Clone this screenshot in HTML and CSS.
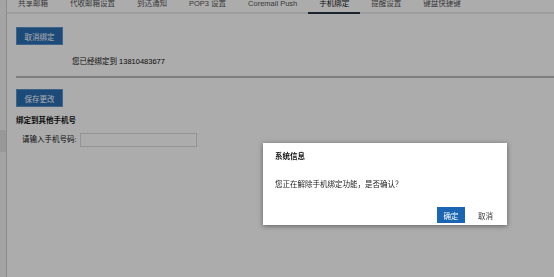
FILE: index.html
```html
<!DOCTYPE html>
<html lang="zh-CN">
<head>
<meta charset="utf-8">
<title>手机绑定</title>
<link rel="stylesheet" href="styles.css">
</head>
<body>
<div class="frame">
  <div class="leftbar"><div class="thumb"></div></div>
  <div class="main">
    <div class="tabs">
      <div class="tab">共享邮箱</div>
      <div class="tab">代收邮箱设置</div>
      <div class="tab">到达通知</div>
      <div class="tab">POP3 设置</div>
      <div class="tab">Coremail Push</div>
      <div class="tab active">手机绑定</div>
      <div class="tab">提醒设置</div>
      <div class="tab">键盘快捷键</div>
    </div>
    <div class="content">
      <div class="section first">
        <button class="btn">取消绑定</button>
        <div class="bound">您已经绑定到 13810483677</div>
      </div>
      <div class="section second">
        <button class="btn">保存更改</button>
        <div class="subtitle">绑定到其他手机号</div>
        <div class="field">
          <label class="label">请输入手机号码:</label>
          <input class="input" type="text">
        </div>
      </div>
    </div>
  </div>
</div>
<div class="overlay"></div>
<div class="dialog">
  <div class="dlg-title">系统信息</div>
  <div class="dlg-body">您正在解除手机绑定功能，是否确认？</div>
  <div class="dlg-actions">
    <button class="dlg-ok">确定</button>
    <button class="dlg-cancel">取消</button>
  </div>
</div>
</body>
</html>
```
FILE: styles.css
```css
* { box-sizing: border-box; }
html, body { margin: 0; padding: 0; }
body {
  width: 554px;
  height: 277px;
  overflow: hidden;
  background: #ffffff;
  font-family: "Liberation Sans", "Noto Sans CJK SC", sans-serif;
  font-size: 7.5px;
  color: #222;
}
.frame { display: flex; height: 277px; }
.leftbar {
  width: 7px;
  background: #f4f4f4;
  border-right: 1px solid #d0d0d0;
  padding-top: 130px;
}
.thumb { width: 6px; height: 22px; background: #e2e2e2; }
.main { flex: 1; min-width: 0; }
.tabs {
  display: flex;
  height: 14px;
  border-bottom: 2px solid #e9e9e9;
}
.tab {
  padding: 0 11px;
  line-height: 8px;
  color: #555;
  white-space: nowrap;
}
.tab.active {
  color: #111;
  border-bottom: 2px solid #2c3444;
  margin-bottom: -2px;
  height: 14px;
}
.content { padding: 0 0 0 9px; }
.section.first { padding-top: 13px; height: 64px; border-bottom: 2px solid #bdbdbd; }
.btn {
  display: block;
  width: 47px;
  height: 18px;
  padding: 0;
  font: inherit;
  color: #fff;
  background: #2a70b6;
  border: 1px solid #5e95cc;
}
.bound { margin: 12px 0 0 56px; line-height: 10px; color: #111; }
.section.second { padding-top: 11px; }
.subtitle { font-weight: bold; margin-top: 9px; line-height: 10px; color: #111; }
.field { display: flex; align-items: center; margin-top: 7px; padding-left: 6px; }
.label { line-height: 10px; color: #111; }
.input {
  margin-left: 3px;
  width: 117px;
  height: 14px;
  border: 1px solid #dcdcdc;
  padding: 0;
  background: #fff;
}
.overlay {
  position: fixed;
  inset: 0;
  background: rgba(0, 0, 0, 0.325);
}
.dialog {
  position: absolute;
  left: 263px;
  top: 143px;
  width: 244px;
  height: 82px;
  background: #fff;
  box-shadow: 0 1px 5px rgba(0, 0, 0, 0.45);
  padding: 9px 12px 0 12px;
  display: flex;
  flex-direction: column;
}
.dlg-title { font-weight: bold; line-height: 10px; color: #111; }
.dlg-body { margin-top: 18px; line-height: 10px; color: #222; }
.dlg-actions {
  margin-top: auto;
  margin-bottom: 2px;
  display: flex;
  justify-content: flex-end;
  align-items: center;
  gap: 13px;
}
.dlg-ok {
  width: 28px;
  height: 16px;
  padding: 0;
  font: inherit;
  color: #fff;
  background: #1a66b2;
  border: 1px solid #1a66b2;
}
.dlg-cancel {
  padding: 0;
  font: inherit;
  color: #333;
  background: none;
  border: 0;
  margin-right: 2px;
}
```
